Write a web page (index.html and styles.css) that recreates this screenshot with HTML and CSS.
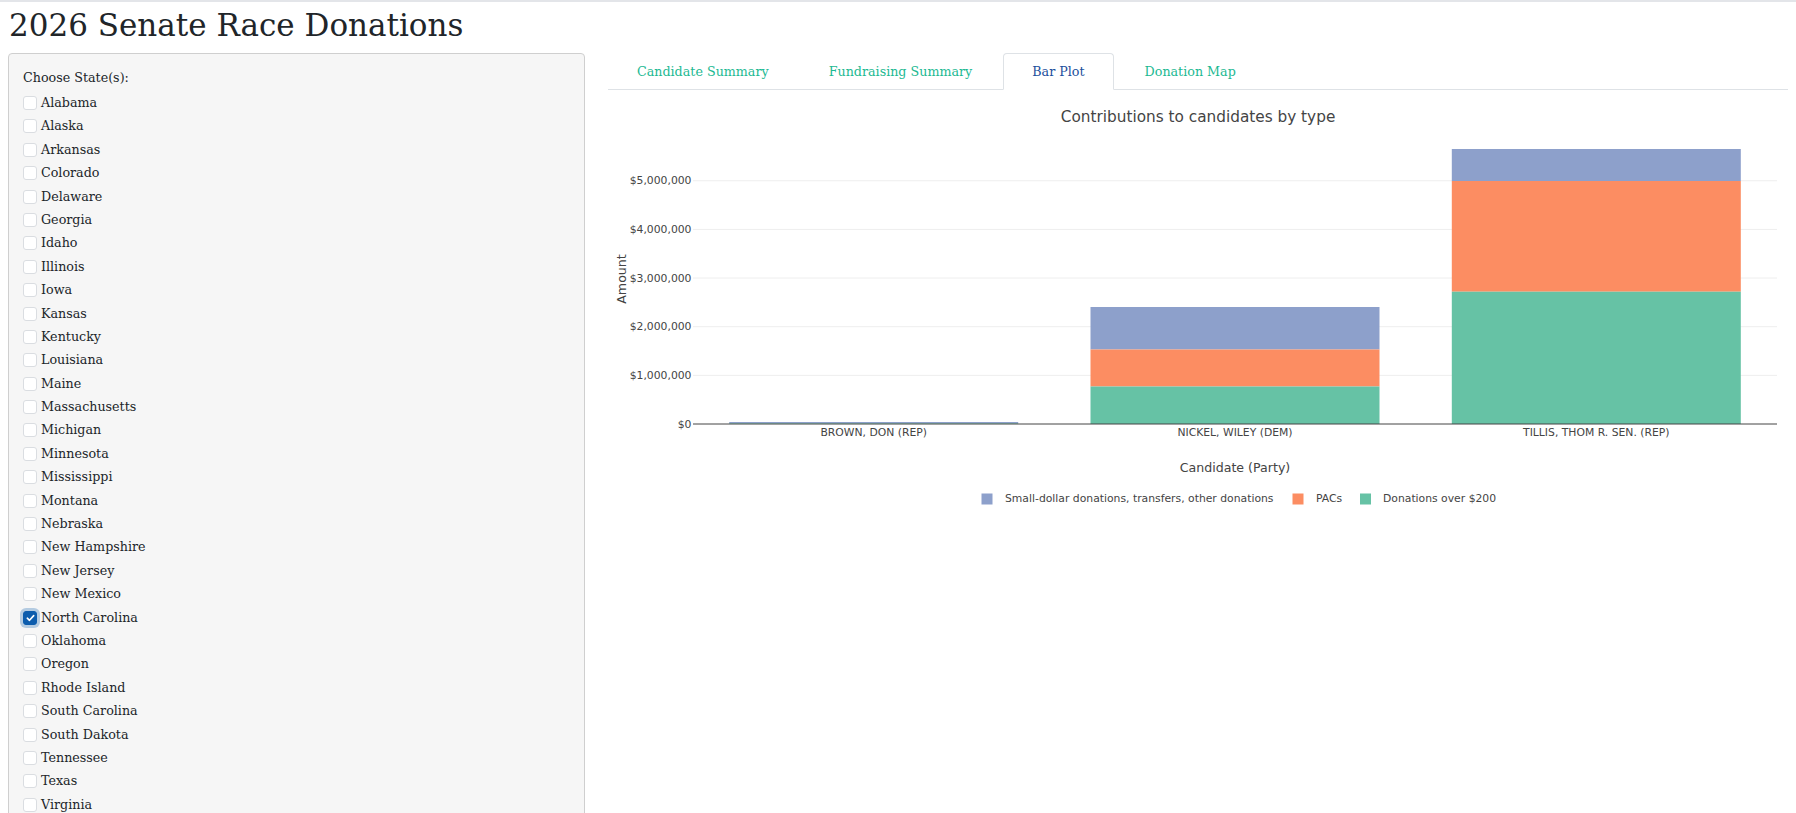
FILE: index.html
```html
<!DOCTYPE html>
<html lang="en">
<head>
<meta charset="utf-8">
<title>2026 Senate Race Donations</title>
<link rel="stylesheet" href="styles.css">
</head>
<body>
<div class="page">
  <h1 class="title">2026 Senate Race Donations</h1>
  <div class="layout">
    <aside class="sidebar">
      <label class="control-label">Choose State(s):</label>
      <div class="options">
        <div class="opt"><span class="box"></span>Alabama</div>
        <div class="opt"><span class="box"></span>Alaska</div>
        <div class="opt"><span class="box"></span>Arkansas</div>
        <div class="opt"><span class="box"></span>Colorado</div>
        <div class="opt"><span class="box"></span>Delaware</div>
        <div class="opt"><span class="box"></span>Georgia</div>
        <div class="opt"><span class="box"></span>Idaho</div>
        <div class="opt"><span class="box"></span>Illinois</div>
        <div class="opt"><span class="box"></span>Iowa</div>
        <div class="opt"><span class="box"></span>Kansas</div>
        <div class="opt"><span class="box"></span>Kentucky</div>
        <div class="opt"><span class="box"></span>Louisiana</div>
        <div class="opt"><span class="box"></span>Maine</div>
        <div class="opt"><span class="box"></span>Massachusetts</div>
        <div class="opt"><span class="box"></span>Michigan</div>
        <div class="opt"><span class="box"></span>Minnesota</div>
        <div class="opt"><span class="box"></span>Mississippi</div>
        <div class="opt"><span class="box"></span>Montana</div>
        <div class="opt"><span class="box"></span>Nebraska</div>
        <div class="opt"><span class="box"></span>New Hampshire</div>
        <div class="opt"><span class="box"></span>New Jersey</div>
        <div class="opt"><span class="box"></span>New Mexico</div>
        <div class="opt"><span class="box checked"><svg width="9" height="8" viewBox="0 0 9 8"><path d="M1.3 4.2 L3.5 6.3 L7.7 1.6" fill="none" stroke="#fff" stroke-width="1.6" stroke-linecap="round" stroke-linejoin="round"/></svg></span>North Carolina</div>
        <div class="opt"><span class="box"></span>Oklahoma</div>
        <div class="opt"><span class="box"></span>Oregon</div>
        <div class="opt"><span class="box"></span>Rhode Island</div>
        <div class="opt"><span class="box"></span>South Carolina</div>
        <div class="opt"><span class="box"></span>South Dakota</div>
        <div class="opt"><span class="box"></span>Tennessee</div>
        <div class="opt"><span class="box"></span>Texas</div>
        <div class="opt"><span class="box"></span>Virginia</div>
      </div>
    </aside>
    <main class="main">
      <nav class="tabs">
        <span class="tab">Candidate Summary</span>
        <span class="tab">Fundraising Summary</span>
        <span class="tab active">Bar Plot</span>
        <span class="tab">Donation Map</span>
      </nav>
      <svg class="chart" width="1180" height="420" viewBox="0 0 1180 420">
        <text class="chart-title" x="590" y="11" text-anchor="middle" dominant-baseline="central">Contributions to candidates by type</text>
        <g class="grid">
          <line x1="85" x2="1169" y1="269.35" y2="269.35"/>
          <line x1="85" x2="1169" y1="220.7" y2="220.7"/>
          <line x1="85" x2="1169" y1="172.05" y2="172.05"/>
          <line x1="85" x2="1169" y1="123.4" y2="123.4"/>
          <line x1="85" x2="1169" y1="74.75" y2="74.75"/>
        </g>
        <g class="ticks">
          <text x="83.5" y="318" text-anchor="end" dominant-baseline="central">$0</text>
          <text x="83.5" y="269.35" text-anchor="end" dominant-baseline="central">$1,000,000</text>
          <text x="83.5" y="220.7" text-anchor="end" dominant-baseline="central">$2,000,000</text>
          <text x="83.5" y="172.05" text-anchor="end" dominant-baseline="central">$3,000,000</text>
          <text x="83.5" y="123.4" text-anchor="end" dominant-baseline="central">$4,000,000</text>
          <text x="83.5" y="74.75" text-anchor="end" dominant-baseline="central">$5,000,000</text>
        </g>
        <text class="axis-title" x="13" y="173" text-anchor="middle" dominant-baseline="central" transform="rotate(-90 13 173)">Amount</text>
        <g class="bars">
          <rect class="b-small" x="121.2" y="316" width="289" height="1.4"/>
          <rect class="b-big" x="121.2" y="317.4" width="289" height="0.6"/>
          <rect class="b-small" x="482.5" y="201" width="289" height="42.5"/>
          <rect class="b-pac" x="482.5" y="243.5" width="289" height="37"/>
          <rect class="b-big" x="482.5" y="280.5" width="289" height="37.5"/>
          <rect class="b-small" x="843.8" y="43" width="289" height="32"/>
          <rect class="b-pac" x="843.8" y="75" width="289" height="110.7"/>
          <rect class="b-big" x="843.8" y="185.7" width="289" height="132.3"/>
        </g>
        <line class="axis" x1="85" x2="1169" y1="318" y2="318"/>
        <g class="ticks">
          <text x="265.7" y="326" text-anchor="middle" dominant-baseline="central">BROWN, DON (REP)</text>
          <text x="627" y="326" text-anchor="middle" dominant-baseline="central">NICKEL, WILEY (DEM)</text>
          <text x="988.3" y="326" text-anchor="middle" dominant-baseline="central">TILLIS, THOM R. SEN. (REP)</text>
        </g>
        <text class="axis-title" x="627" y="361" text-anchor="middle" dominant-baseline="central">Candidate (Party)</text>
        <g class="legend">
          <rect class="b-small" x="373.5" y="387.5" width="11" height="11"/>
          <text x="397" y="392" dominant-baseline="central">Small-dollar donations, transfers, other donations</text>
          <rect class="b-pac" x="684.5" y="387.5" width="11" height="11"/>
          <text x="708" y="392" dominant-baseline="central">PACs</text>
          <rect class="b-big" x="752" y="387.5" width="11" height="11"/>
          <text x="775" y="392" dominant-baseline="central">Donations over $200</text>
        </g>
      </svg>
    </main>
  </div>
</div>
</body>
</html>
```
FILE: styles.css
```css
html, body {
  margin: 0;
  padding: 0;
}

body {
  font-family: "DejaVu Serif", "Liberation Serif", serif;
  color: #212529;
  background: #fff;
  border-top: 2px solid #e3e5e9;
}

.page {
  padding: 0 8px;
}

.title {
  font-size: 31px;
  font-weight: 400;
  line-height: 36px;
  margin: 0;
  padding: 5px 0 10px 1px;
  color: #212529;
}

.layout {
  display: flex;
  gap: 23px;
  align-items: flex-start;
}

.sidebar {
  width: 577px;
  flex: 0 0 577px;
  box-sizing: border-box;
  background: #f6f6f6;
  border: 1px solid #cfcfcf;
  border-radius: 4px;
  padding: 14px 14px 14px 14px;
}

.control-label {
  display: block;
  font-size: 12.7px;
  line-height: 20px;
  margin-bottom: 3.3px;
}

.opt {
  display: flex;
  align-items: center;
  height: 23.4px;
  font-size: 12.7px;
  line-height: 20px;
}

.box {
  display: flex;
  align-items: center;
  justify-content: center;
  width: 14px;
  height: 14px;
  box-sizing: border-box;
  border: 1px solid #dadde1;
  border-radius: 3px;
  background: #fff;
  margin-left: 0.3px;
  margin-right: 3.7px;
  flex: 0 0 14px;
}

.box.checked {
  background: #0b5cad;
  border-color: #0b5cad;
  box-shadow: 0 0 0 3px rgba(11, 92, 173, 0.28);
}

.main {
  flex: 1 1 auto;
  min-width: 0;
}

.tabs {
  display: flex;
  border-bottom: 1px solid #dee2e6;
}

.tab {
  display: block;
  border: 1px solid transparent;
  border-radius: 4px 4px 0 0;
  padding: 8px 28px 7px;
  line-height: 20px;
  font-size: 12.7px;
  color: #1cb992;
  margin-right: 2px;
  margin-bottom: -1px;
  white-space: nowrap;
}

.tab.active {
  border-color: #dee2e6 #dee2e6 #fff;
  background: #fff;
  color: #1c4f9c;
}

.chart {
  display: block;
  margin-top: 16px;
  font-family: "DejaVu Sans", Verdana, sans-serif;
}

.chart-title {
  font-size: 15.3px;
  fill: #444;
}

.grid line {
  stroke: #eeeeee;
  stroke-width: 1;
}

.ticks text {
  font-size: 10.8px;
  fill: #444;
}

.axis-title {
  font-size: 12.6px;
  fill: #444;
}

.axis {
  stroke: #444;
  stroke-width: 1;
}

.legend text {
  font-size: 10.8px;
  fill: #444;
}

.b-small { fill: #8da0cb; }
.b-pac { fill: #fc8d62; }
.b-big { fill: #66c2a5; }
```
